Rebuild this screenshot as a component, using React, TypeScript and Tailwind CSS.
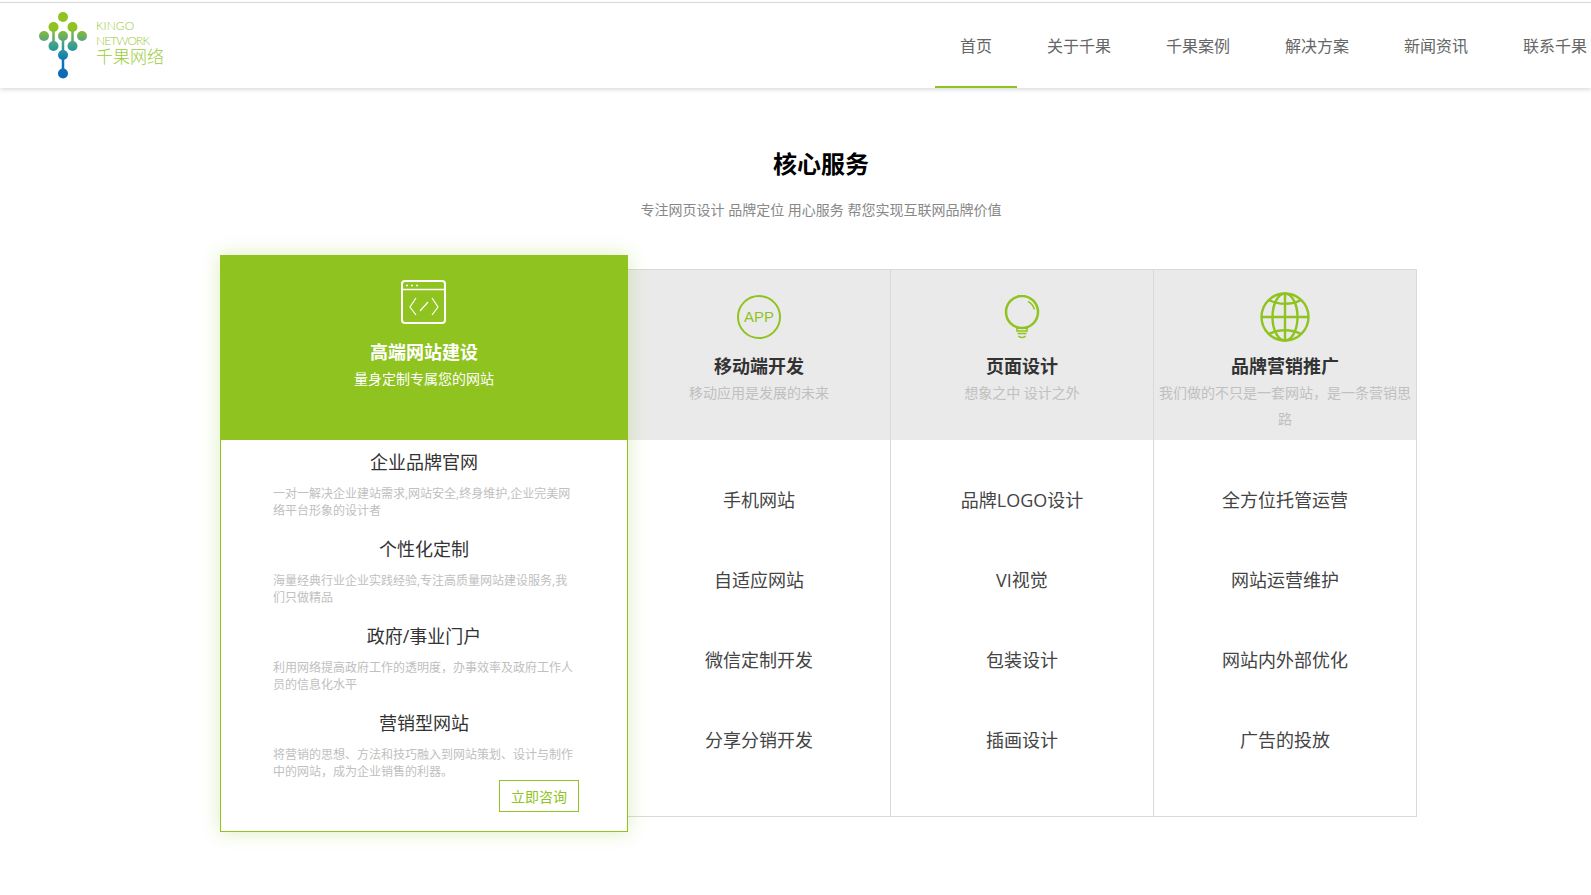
import React from 'react';

const navItems = ['首页', '关于千果', '千果案例', '解决方案', '新闻资讯', '联系千果'];

const featured = [
  { title: '企业品牌官网', desc: '一对一解决企业建站需求,网站安全,终身维护,企业完美网络平台形象的设计者' },
  { title: '个性化定制', desc: '海量经典行业企业实践经验,专注高质量网站建设服务,我们只做精品' },
  { title: '政府/事业门户', desc: '利用网络提高政府工作的透明度，办事效率及政府工作人员的信息化水平' },
  { title: '营销型网站', desc: '将营销的思想、方法和技巧融入到网站策划、设计与制作中的网站，成为企业销售的利器。' },
];

function Logo() {
  const dots = [
    [63, 17], [53.5, 27], [72.5, 27], [44, 36], [63, 36], [82, 36], [53.5, 46], [72.5, 46], [63, 55], [63, 73.5],
  ];
  return (
    <svg width="50" height="70" viewBox="39 11 50 70" className="shrink-0">
      <defs>
        <linearGradient id="tree" gradientUnits="userSpaceOnUse" x1="0" y1="20" x2="0" y2="78">
          <stop offset="0" stopColor="#8fc31f" />
          <stop offset="0.15" stopColor="#8fc31f" />
          <stop offset="0.32" stopColor="#62a971" />
          <stop offset="0.5" stopColor="#2a9a9a" />
          <stop offset="0.68" stopColor="#0f76b8" />
          <stop offset="1" stopColor="#0b68b5" />
        </linearGradient>
      </defs>
      <path
        d="M53.5 27V46M72.5 27V46M63 36V73.5"
        fill="none"
        stroke="url(#tree)"
        strokeWidth="2.5"
      />
      {dots.map(([cx, cy]) => (
        <circle key={`${cx}-${cy}`} cx={cx} cy={cy} r="5" fill="url(#tree)" />
      ))}
    </svg>
  );
}

function CodeIcon() {
  return (
    <svg width="46" height="44" viewBox="0 0 46 44" fill="none" stroke="#fff">
      <rect x="1" y="1" width="43" height="42" rx="3" strokeWidth="2" />
      <path d="M1 9.5H44" strokeWidth="1.5" />
      <path d="M5 5.5H7M10 5.5H12M15 5.5H17" strokeWidth="1.5" />
      <path d="M15 18L9 27L15 35M31 18L37 27L31 35M19 31L27 22" strokeWidth="1.2" />
    </svg>
  );
}

function AppIcon() {
  return (
    <div className="w-[44px] h-[44px] rounded-full border-2 border-[#8fc31f] flex items-center justify-center text-[#8fc31f] text-[15px] font-['Liberation_Sans',sans-serif]">
      APP
    </div>
  );
}

function BulbIcon() {
  return (
    <svg width="36" height="44" viewBox="0 0 36 44" fill="none" stroke="#8fc31f">
      <circle cx="18" cy="17" r="16" strokeWidth="2.5" />
      <path d="M24 6.5C27 8 29.5 11 30.5 14.5" strokeWidth="1.5" />
      <path d="M13 33H23V36H13ZM13.5 38.5H22.5M14.5 41C16 43 20 43 21.5 41" strokeWidth="1.6" />
    </svg>
  );
}

function GlobeIcon() {
  return (
    <svg width="50" height="50" viewBox="0 0 50 50" fill="none" stroke="#8fc31f" strokeWidth="2.4">
      <circle cx="25" cy="25" r="23.5" />
      <ellipse cx="25" cy="25" rx="12.5" ry="23.5" />
      <path d="M25 1.5V48.5M1.5 25H48.5" />
      <path d="M9 8C18 13 32 13 41 8M9 42C18 37 32 37 41 42" />
    </svg>
  );
}

const columns = [
  {
    icon: <AppIcon />,
    title: '移动端开发',
    desc: '移动应用是发展的未来',
    items: ['手机网站', '自适应网站', '微信定制开发', '分享分销开发'],
  },
  {
    icon: <BulbIcon />,
    title: '页面设计',
    desc: '想象之中 设计之外',
    items: ['品牌LOGO设计', 'VI视觉', '包装设计', '插画设计'],
  },
  {
    icon: <GlobeIcon />,
    title: '品牌营销推广',
    desc: '我们做的不只是一套网站，是一条营销思路',
    items: ['全方位托管运营', '网站运营维护', '网站内外部优化', '广告的投放'],
  },
];

export default function App() {
  return (
    <div className="h-[895px] overflow-hidden bg-white text-[#333] font-['Open_Sans','Noto_Sans_CJK_SC',sans-serif]">
      {/* Header */}
      <header className="relative z-20 mt-[2px] h-[86px] border-t border-[#d9d9d9] bg-white flex shadow-[0_2px_4px_rgba(0,0,0,0.13)]">
        <div className="pl-[39px] pt-[8px] flex w-[935px] shrink-0">
          <Logo />
          <div className="ml-[7px] pt-[7px] text-[#9ccb3b] font-['Lato',sans-serif] font-light leading-[15px] text-[12px]">
            <div>KINGO</div>
            <div className="tracking-[-0.9px]">NETWORK</div>
            <div className="text-[17px] leading-[15px] font-['Noto_Sans_CJK_SC',sans-serif] font-light">千果网络</div>
          </div>
        </div>
        <nav className="flex shrink-0 gap-[5px] h-[85px]">
          {navItems.map((item, i) => (
            <a
              key={item}
              className={`px-[25px] pt-[2px] h-full flex items-center text-[16px] text-[#666] whitespace-nowrap border-b-2 ${i === 0 ? 'border-[#8fc31f]' : 'border-transparent'}`}
            >
              {item}
            </a>
          ))}
        </nav>
      </header>

      {/* 核心服务 */}
      <section className="ml-[220px] w-[1202px] pt-[58px]">
        <h2 className="text-center text-[24px] leading-[36px] font-bold text-black">核心服务</h2>
        <p className="mt-[18px] text-center text-[14px] leading-[20px] text-[#888]">
          专注网页设计 品牌定位 用心服务 帮您实现互联网品牌价值
        </p>

        <div className="mt-[35px] flex items-start">
          <div className="relative z-10 w-[408px] h-[577px] shrink-0 bg-white border border-[#8fc31f] shadow-[0_0_18px_rgba(143,195,31,0.3)]">
            <div className="h-[184px] bg-[#8fc31f] text-white flex flex-col items-center pt-[24px]">
              <CodeIcon />
              <div className="mt-[15px] text-[18px] leading-[27px] font-bold">高端网站建设</div>
              <div className="text-[14px] leading-[26px]">量身定制专属您的网站</div>
            </div>
            <div className="pt-[9px] flex flex-col items-center">
              {featured.map(f => (
                <div key={f.title} className="h-[87px] w-full flex flex-col items-center">
                  <div className="text-[18px] leading-[27px]">{f.title}</div>
                  <p className="mt-[9px] w-[304px] self-start ml-[52px] text-[12px] leading-[17px] text-[#c0c0c0]">{f.desc}</p>
                </div>
              ))}
            </div>
            <div className="flex justify-end pr-[48px] -mt-[17px]">
              <a className="relative w-[80px] h-[32px] border border-[#8fc31f] text-[#8fc31f] text-[14px] flex items-center justify-center">
                立即咨询
              </a>
            </div>
          </div>

          <div className="mt-[14px] -ml-px grid grid-cols-3 w-[790px] border-r border-b border-[#d9d9d9] h-[548px]">
            {columns.map(col => (
              <div key={col.title} className="border-l border-[#d9d9d9]">
                <div className="h-[171px] bg-[#eaeaea] border-t border-[#d9d9d9] flex flex-col items-center text-center">
                  <div className="h-[50px] mt-[22px] flex items-center justify-center">{col.icon}</div>
                  <div className="mt-[11px] text-[18px] leading-[27px] font-bold">{col.title}</div>
                  <p className="px-[4px] text-[14px] leading-[26px] text-[#c0c0c0]">{col.desc}</p>
                </div>
                <ul className="pt-[20px]">
                  {col.items.map(item => (
                    <li key={item} className="h-[80px] flex items-center justify-center text-[18px] text-[#444]">
                      {item}
                    </li>
                  ))}
                </ul>
              </div>
            ))}
          </div>
        </div>
      </section>
    </div>
  );
}
